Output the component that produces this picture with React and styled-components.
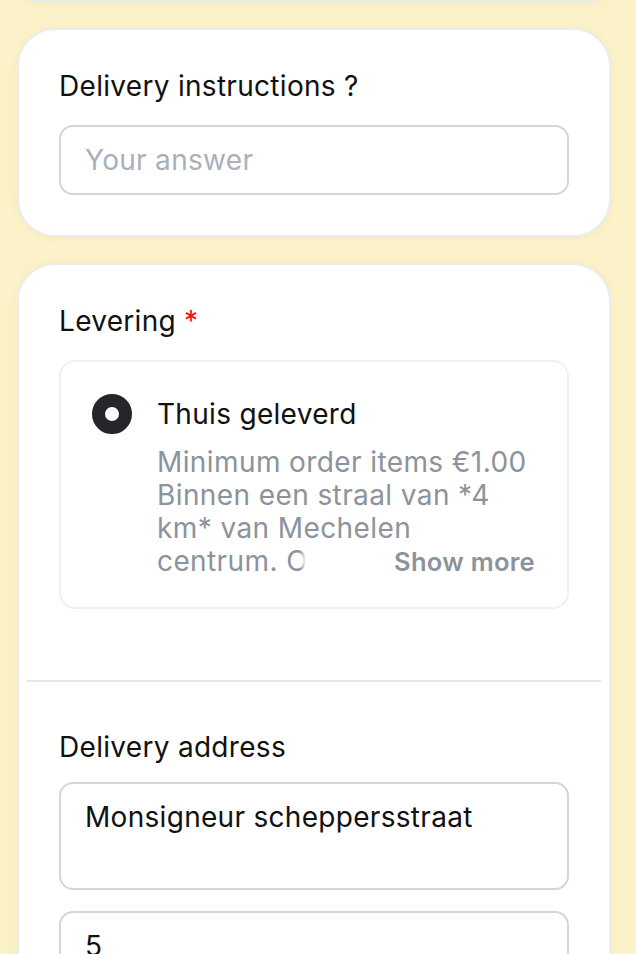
import React from "react";
import styled, { createGlobalStyle } from "styled-components";

const Global = createGlobalStyle`
  html, body { margin: 0; padding: 0; }
  body {
    background: #fbf2c9;
    font-family: Inter, "Noto Sans", sans-serif;
    color: #111;
  }
`;

const Page = styled.div`
  display: flex;
  flex-direction: column;
  gap: 26px;
  padding: 0 26px 0 17px;
  margin-top: -40px;
  height: 994px;
  overflow: hidden;
`;

const Card = styled.div`
  background: #fff;
  border: 2px solid #ececec;
  border-radius: 38px;
  box-shadow: 0 1px 8px rgba(200, 180, 100, 0.12);
  width: 594px;
  box-sizing: border-box;
  flex-shrink: 0;
  height: ${p => p.$h || "auto"};
`;

const Section = styled.div`
  padding: ${p => p.$pad || "38px 40px 40px 40px"};
  display: flex;
  flex-direction: column;
`;

const Title = styled.div`
  font-size: 28px;
  line-height: 34px;
  font-weight: 400;
  letter-spacing: 0.3px;
  margin-bottom: ${p => p.$mb || "25px"};
`;

const Star = styled.span`
  color: #f01010;
  margin-left: 8px;
`;

const Field = styled.div`
  border: 2px solid #d3d6db;
  border-radius: 14px;
  height: ${p => p.$h || "70px"};
  box-sizing: border-box;
  padding: ${p => (p.$top ? "16px 24px" : "0 24px")};
  display: flex;
  align-items: ${p => (p.$top ? "flex-start" : "center")};
  font-size: 28px;
  line-height: 34px;
  letter-spacing: 0.3px;
  color: ${p => (p.$placeholder ? "#a9b0b9" : "#111")};
  margin-bottom: ${p => p.$mb || "0"};
`;

const Option = styled.div`
  border: 2px solid #f1f1f3;
  border-radius: 16px;
  padding: 32px 32px 29px 31px;
  display: flex;
  gap: 25px;
  align-items: flex-start;
`;

const Radio = styled.div`
  width: 40px;
  height: 40px;
  border-radius: 50%;
  box-sizing: border-box;
  border: 13px solid #25262b;
  background: #fff;
  flex-shrink: 0;
`;

const OptionBody = styled.div`
  display: flex;
  flex-direction: column;
  flex: 1;
`;

const OptionName = styled.div`
  font-size: 28px;
  line-height: 40px;
  letter-spacing: 0.3px;
  margin-bottom: 12px;
`;

const DescWrap = styled.div`
  position: relative;
  font-size: 28px;
  line-height: 33px;
  letter-spacing: 0.4px;
  color: #8b939c;
  height: 132px;
  overflow: hidden;
`;

const ShowMore = styled.span`
  position: absolute;
  right: 0;
  top: 99px;
  line-height: 33px;
  font-weight: 600;
  font-size: 25.5px;
  letter-spacing: 0.3px;
  padding-left: 94px;
  background: linear-gradient(to right, rgba(255,255,255,0) 0, #fff 6px);
`;

const Divider = styled.div`
  height: 2px;
  background: #e4e6ea;
  margin: 0 8px;
`;

export default function App() {
  return (
    <>
      <Global />
      <Page>
        <Card $h="42px" />
        <Card>
          <Section $pad="39px 40px 40px 40px">
            <Title $mb="22px">Delivery instructions ?</Title>
            <Field $placeholder>Your answer</Field>
          </Section>
        </Card>
        <Card>
          <Section $pad="39px 40px 71px 40px">
            <Title $mb="22px">
              Levering<Star>*</Star>
            </Title>
            <Option>
              <Radio />
              <OptionBody>
                <OptionName>Thuis geleverd</OptionName>
                <DescWrap>
                  Minimum order items €1.00<br />
                  Binnen een straal van *4 km* van Mechelen centrum. Onze levertijden zijn van dinsdag tot zaterdag.
                  <ShowMore>Show more</ShowMore>
                </DescWrap>
              </OptionBody>
            </Option>
          </Section>
          <Divider />
          <Section $pad="48px 40px 40px 40px">
            <Title $mb="18px">Delivery address</Title>
            <Field $top $h="108px" $mb="21px">Monsigneur scheppersstraat</Field>
            <Field $top $h="108px">5</Field>
          </Section>
        </Card>
      </Page>
    </>
  );
}
